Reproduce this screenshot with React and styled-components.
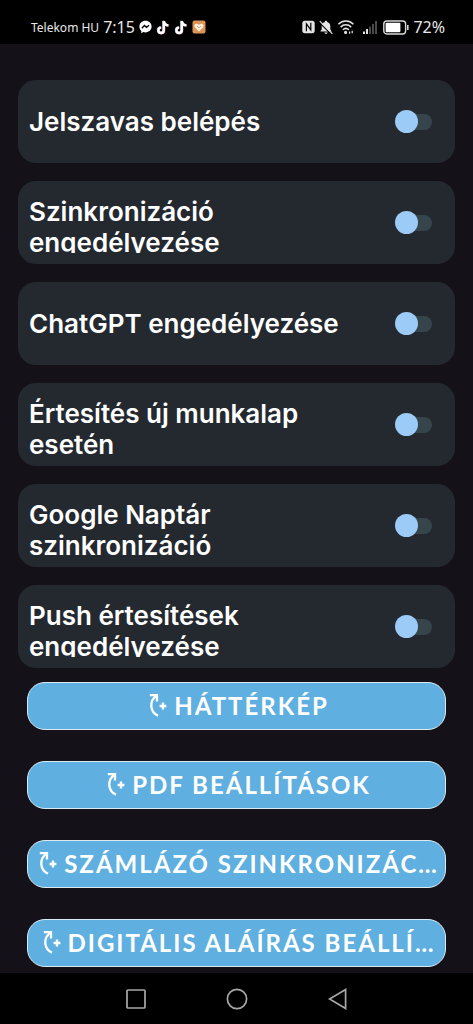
import React, { useState } from 'react'
import styled, { createGlobalStyle } from 'styled-components'

const GlobalStyle = createGlobalStyle`
  * {
    box-sizing: border-box;
  }
  body {
    margin: 0;
    background: #141118;
    font-family: Lato, 'Noto Sans', sans-serif;
  }
`

const settings = [
  { id: 'password', label: 'Jelszavas belépés' },
  { id: 'sync', label: 'Szinkronizáció engedélyezése' },
  { id: 'chatgpt', label: 'ChatGPT engedélyezése' },
  { id: 'worksheet', label: 'Értesítés új munkalap esetén' },
  { id: 'calendar', label: 'Google Naptár szinkronizáció' },
  { id: 'push', label: 'Push értesítések engedélyezése' },
]

const actions = [
  'HÁTTÉRKÉP',
  'PDF BEÁLLÍTÁSOK',
  'SZÁMLÁZÓ SZINKRONIZÁC…',
  'DIGITÁLIS ALÁÍRÁS BEÁLLÍ…',
]

export default function App() {
  return (
    <Page>
      <GlobalStyle />
      <StatusBar />
      <Content>
        <SettingList>
          {settings.map(setting => <Setting key={setting.id} {...setting} />)}
        </SettingList>
        <ActionList>
          {actions.map(action => (
            <ActionButton key={action} type='button'>
              <ActionIcon />
              <ActionText>{action}</ActionText>
            </ActionButton>
          ))}
        </ActionList>
      </Content>
      <NavBar>
        <NavButton type='button' aria-label='Recent apps'>
          <svg width='20' height='20' viewBox='0 0 20 20'>
            <rect x='1' y='1' width='18' height='18' rx='1' />
          </svg>
        </NavButton>
        <NavButton type='button' aria-label='Home'>
          <svg width='22' height='22' viewBox='0 0 22 22'>
            <circle cx='11' cy='11' r='9.6' />
          </svg>
        </NavButton>
        <NavButton type='button' aria-label='Back'>
          <svg width='20' height='22' viewBox='0 0 20 22'>
            <path d='M17.6 1.6V20.4L1.6 11Z' />
          </svg>
        </NavButton>
      </NavBar>
    </Page>
  )
}

function Setting({ id, label }) {
  const [on, setOn] = useState(false)

  return (
    <Card>
      <CardLabel htmlFor={id}>
        <CardText>{label}</CardText>
      </CardLabel>
      <Switch id={id} type='checkbox' checked={on} onChange={() => setOn(!on)} />
    </Card>
  )
}

function StatusBar() {
  return (
    <Bar>
      <BarGroup>
        <Carrier>Telekom HU</Carrier>
        <Clock>7:15</Clock>
        <MessengerIcon />
        <TiktokIcon />
        <TiktokIcon />
        <HeartIcon />
      </BarGroup>
      <BarGroup>
        <NfcIcon />
        <BellOffIcon />
        <WifiIcon />
        <SignalIcon />
        <BatteryIcon />
        <Clock>72%</Clock>
      </BarGroup>
    </Bar>
  )
}

const ActionIcon = () => (
  <svg width='18' height='24' viewBox='0 0 18 24' fill='none' stroke='#fff' strokeWidth='2.3'>
    <path d='M.8 2.2H8V8.6' />
    <path d='M7.8 2.4C3.6 5.4 1.9 9 2.3 13.4C2.8 18 5 21 9 22.6' />
    <path d='M14 9.6V16.4M10.6 13H17.4' strokeWidth='2.4' />
  </svg>
)

const MessengerIcon = () => (
  <svg width='13' height='14' viewBox='0 0 13 14'>
    <path d='M6.5 .8C3 .8 .4 3.2 .4 6.6C.4 8.4 1.1 9.9 2.3 11V13.2L4.4 12.1C5.1 12.3 5.8 12.4 6.5 12.4C10 12.4 12.6 9.9 12.6 6.6C12.6 3.2 10 .8 6.5 .8Z' fill='#fff' />
    <path d='M2.9 8.2L5.4 5.5L7.5 7.3L10.1 5.2' fill='none' stroke='#000' strokeWidth='1.3' />
  </svg>
)

const TiktokIcon = () => (
  <svg width='14' height='15' viewBox='0 0 14 15' fill='none' strokeWidth='2.4'>
    <path d='M7.4 .8V10.2A2.7 2.7 0 1 1 4.7 7.4M7.4 1C7.8 3.6 9.6 5 12 5.2' stroke='#5fd0cf' />
    <path d='M8.2 1.2V10.6A2.7 2.7 0 1 1 5.5 7.8M8.2 1.4C8.6 4 10.4 5.4 12.8 5.6' stroke='#c2405c' />
    <path d='M7.8 1V10.4A2.7 2.7 0 1 1 5.1 7.6M7.8 1.2C8.2 3.8 10 5.2 12.4 5.4' stroke='#fff' />
  </svg>
)

const HeartIcon = () => (
  <svg width='14' height='14' viewBox='0 0 14 14'>
    <rect x='.5' y='.5' width='13' height='13' rx='2' fill='#dd9556' />
    <path d='M7 11.4L3 7.4C1 5.2 4.2 2.1 7 4.8C9.8 2.1 13 5.2 11 7.4Z' fill='#fdeedd' />
    <path d='M5 6L7 7.9L9 6' fill='none' stroke='#dd9556' strokeWidth='.9' />
  </svg>
)

const NfcIcon = () => (
  <svg width='13' height='14' viewBox='0 0 13 14'>
    <rect x='.3' y='.8' width='12.4' height='12.4' rx='2.6' fill='#e4e4e4' />
    <path d='M4.4 11.2V3.8L8.8 9.8V2.8' fill='none' stroke='#000' strokeWidth='1.2' />
  </svg>
)

const BellOffIcon = () => (
  <svg width='14' height='15' viewBox='0 0 14 15'>
    <path d='M7 .8C7.8 .8 8.2 1.3 8.2 2C10.4 2.6 11.3 4.2 11.3 6.2V9.6L12.8 11.6H1.2L2.7 9.6V6.2C2.7 4.2 3.6 2.6 5.8 2C5.8 1.3 6.2 .8 7 .8ZM5.3 12.6H8.7C8.4 14.4 5.6 14.4 5.3 12.6Z' fill='#e4e4e4' />
    <path d='M0 2.2L12.4 14.4' stroke='#000' strokeWidth='1.2' />
    <path d='M.8 1.2L13.4 13.8' stroke='#e4e4e4' strokeWidth='1.2' />
  </svg>
)

const WifiIcon = () => (
  <svg width='18' height='16' viewBox='0 0 18 16' fill='none' stroke='#e4e4e4' strokeWidth='1.5'>
    <path d='M1.4 5.2C5.6 1 12.2 1 16.4 5.2M3.6 8.1C6.6 5.1 11.2 5.1 14.2 8.1M5.9 10.8C7.8 9 10 9 11.9 10.8' />
    <circle cx='8.6' cy='13.4' r='.8' fill='#e4e4e4' />
    <path d='M12.6 12.4V14.8M15.2 11.8V14.2' strokeWidth='1.2' />
  </svg>
)

const SignalIcon = () => (
  <svg width='20' height='15' viewBox='5 0 20 15'>
    <path d='M9 11.5H11V14H9ZM12 9H14V14H12Z' fill='#e4e4e4' />
    <path d='M15 6.5H17V14H15ZM18 4H20V14H18ZM21 1H23V14H21Z' fill='#4a4a4a' />
  </svg>
)

const BatteryIcon = () => (
  <svg width='26' height='15' viewBox='0 0 26 15'>
    <rect x='.8' y='1' width='21.8' height='13' rx='3' fill='none' stroke='#d8d8d8' strokeWidth='1.4' />
    <rect x='2.6' y='2.8' width='14.8' height='9.4' rx='1' fill='#fff' />
    <path d='M24.8 5V10' stroke='#d8d8d8' strokeWidth='1.6' />
  </svg>
)

const Page = styled.div`
  min-height: 100vh;
  display: flex;
  flex-direction: column;
`

const Bar = styled.header`
  height: 44px;
  padding: 10px 28px 0 31px;
  display: flex;
  align-items: center;
  justify-content: space-between;
  background: #000;
  color: #e8e8e8;
  white-space: nowrap;
`

const BarGroup = styled.div`
  display: flex;
  align-items: center;
  gap: 4px;
`

const Carrier = styled.span`
  font-family: 'Noto Sans', sans-serif;
  font-size: 12px;
`

const Clock = styled.span`
  font-family: 'Noto Sans', sans-serif;
  font-size: 16px;
`

const Content = styled.main`
  flex: 1;
  padding: 36px 18px 6px;
  display: flex;
  flex-direction: column;
  gap: 14px;
`

const SettingList = styled.section`
  display: flex;
  flex-direction: column;
  gap: 18px;
`

const Card = styled.div`
  padding: 11px 23px 11px 11px;
  display: flex;
  align-items: center;
  gap: 24px;
  border-radius: 18px;
  background: #242930;
`

const CardLabel = styled.label`
  flex: 1;
  height: 61px;
  display: flex;
  align-items: safe center;
  overflow: hidden;
  cursor: pointer;
`

const CardText = styled.span`
  padding: 4px 0;
  color: #fff;
  font-family: Inter, 'Noto Sans', sans-serif;
  font-size: 26px;
  font-weight: 600;
  line-height: 31px;
`

const Switch = styled.input`
  appearance: none;
  flex-shrink: 0;
  width: 35px;
  height: 16px;
  margin: 0;
  display: flex;
  align-items: center;
  border-radius: 8px;
  background: #36454b;
  cursor: pointer;

  &::before {
    content: '';
    flex-shrink: 0;
    width: 23px;
    height: 23px;
    margin-left: ${props => (props.checked ? '14px' : '-2px')};
    border-radius: 50%;
    background: #9dcbf7;
  }
`

const ActionList = styled.section`
  padding: 0 9px;
  display: flex;
  flex-direction: column;
  gap: 31px;
`

const ActionButton = styled.button`
  height: 48px;
  padding: 0 5px 2px 10px;
  display: flex;
  align-items: center;
  justify-content: center;
  gap: 7px;
  border: 1px solid #dcebf3;
  border-radius: 18px;
  background: #5fb0e0;
  color: #fff;
  font-family: inherit;
  font-size: 24px;
  font-weight: 700;
  letter-spacing: 2px;
  white-space: nowrap;
  cursor: pointer;

  svg {
    flex-shrink: 0;
  }
`

const ActionText = styled.span`
  overflow: hidden;
  text-overflow: ellipsis;
`

const NavBar = styled.nav`
  height: 51px;
  display: flex;
  align-items: center;
  justify-content: center;
  gap: 57px;
  background: #000;
`

const NavButton = styled.button`
  width: 44px;
  height: 44px;
  padding: 0;
  display: flex;
  align-items: center;
  justify-content: center;
  border: 0;
  background: none;

  svg {
    fill: none;
    stroke: #a8a8a8;
    stroke-width: 1.7;
  }
`
